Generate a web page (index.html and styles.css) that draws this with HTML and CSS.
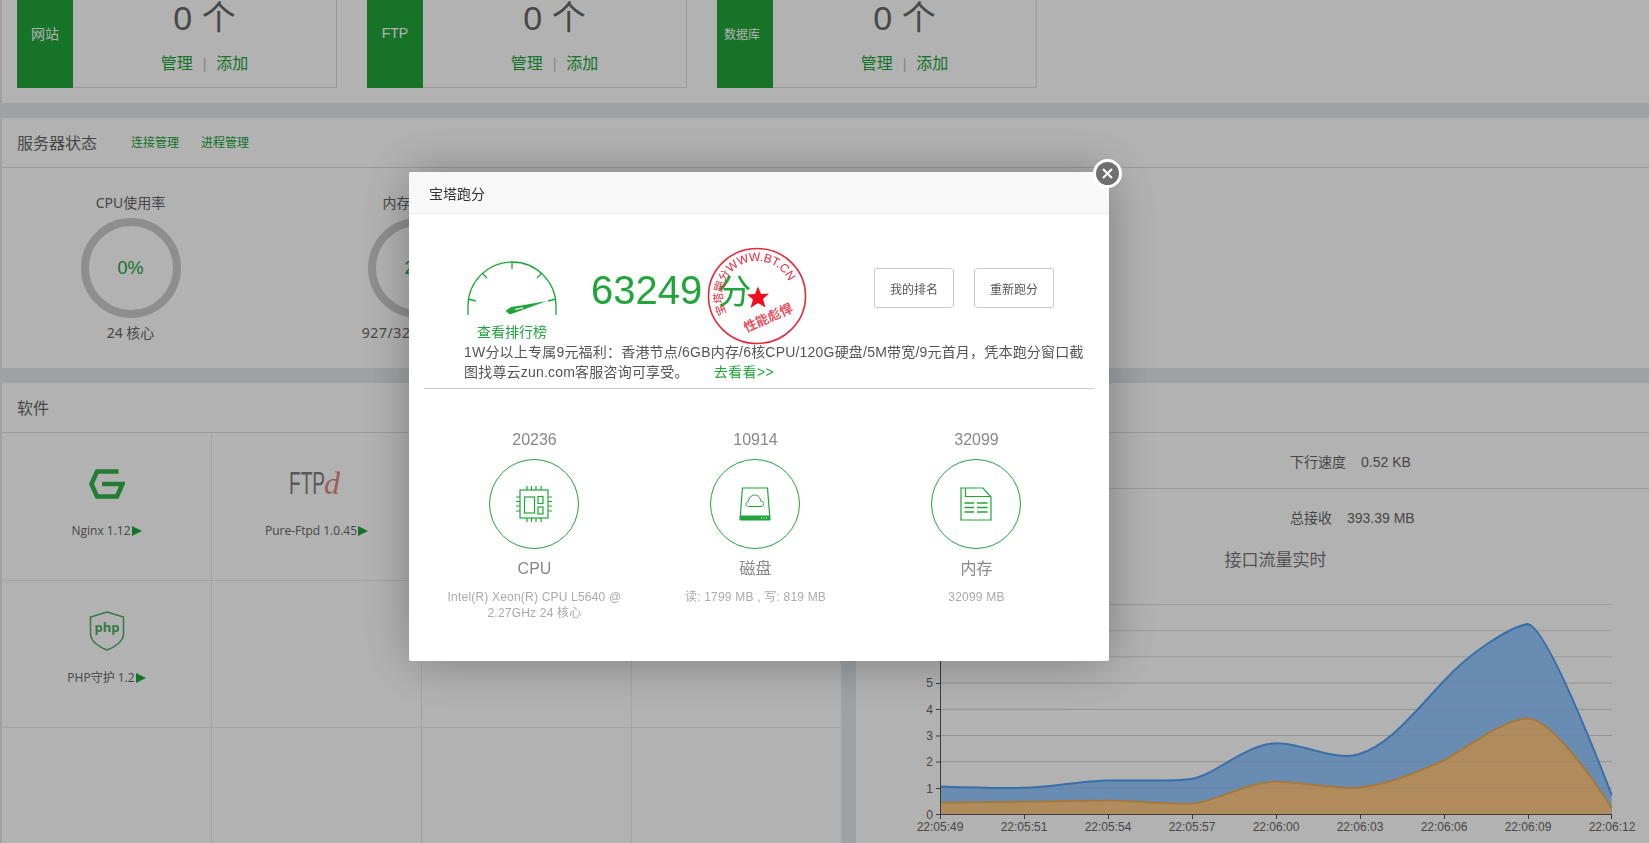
FILE: index.html
```html
<!DOCTYPE html>
<html lang="zh-CN">
<head>
<meta charset="utf-8">
<title>宝塔跑分</title>
<link rel="stylesheet" href="styles.css">
</head>
<body>
<div class="page">
  <section class="panel panel-stats">
    <div class="stat-row">
      <div class="stat-box"><div class="stat-tag">网站</div><div class="stat-main"><div class="stat-num">0 个</div><div class="stat-links"><a>管理</a><i>|</i><a>添加</a></div></div></div>
      <div class="stat-box"><div class="stat-tag">FTP</div><div class="stat-main"><div class="stat-num">0 个</div><div class="stat-links"><a>管理</a><i>|</i><a>添加</a></div></div></div>
      <div class="stat-box"><div class="stat-tag stat-tag-long">数据库</div><div class="stat-main"><div class="stat-num">0 个</div><div class="stat-links"><a>管理</a><i>|</i><a>添加</a></div></div></div>
    </div>
  </section>

  <section class="panel panel-server">
    <header class="panel-head"><h2>服务器状态</h2><a>连接管理</a><a>进程管理</a></header>
    <div class="load-row">
      <div class="load-item"><div class="load-title">CPU使用率</div><div class="ring">0%</div><div class="load-note">24 核心</div></div>
      <div class="load-item"><div class="load-title">内存使用率</div><div class="ring">2%</div><div class="load-note load-note-wide">927/32099 (MB)</div></div>
    </div>
  </section>

  <div class="bottom-row">
    <section class="panel panel-soft">
      <header class="panel-head"><h2>软件</h2></header>
      <div class="soft-grid">
        <div class="soft-cell">
          <div class="soft-icon"><svg width="36" height="30" viewBox="0 0 36 30"><path class="nginx-g" d="M29.500 2.500H8L2.500 15L8 27.500H28L33.500 15H13"/></svg></div>
          <div class="soft-label">Nginx 1.12<b class="play"></b></div>
        </div>
        <div class="soft-cell">
          <div class="soft-icon"><svg class="ftp-logo" width="58" height="28" viewBox="0 0 58 28"><text class="ftp-t" x="1" y="24" textLength="36" lengthAdjust="spacingAndGlyphs">FTP</text><text class="ftp-d" x="36" y="24">d</text></svg></div>
          <div class="soft-label">Pure-Ftpd 1.0.45<b class="play"></b></div>
        </div>
        <div class="soft-cell"></div>
        <div class="soft-cell"></div>
        <div class="soft-cell">
          <div class="soft-icon"><svg width="36" height="40" viewBox="0 0 36 40"><path class="php-shield" d="M18 1L34.500 6V23C34.500 30 26 36 18 39C10 36 1.500 30 1.500 23V6Z"/><text class="php-t" x="18" y="21">php</text></svg></div>
          <div class="soft-label">PHP守护 1.2<b class="play"></b></div>
        </div>
        <div class="soft-cell"></div>
        <div class="soft-cell"></div>
        <div class="soft-cell"></div>
        <div class="soft-cell"></div>
        <div class="soft-cell"></div>
        <div class="soft-cell"></div>
        <div class="soft-cell"></div>
      </div>
    </section>

    <section class="panel panel-net">
      <header class="panel-head"><h2>网络流量</h2></header>
      <div class="net-row net-row-line"><div class="net-col"><span>上行速度</span><span>0.34 KB</span></div><div class="net-col"><span>下行速度</span><span>0.52 KB</span></div></div>
      <div class="net-row"><div class="net-col"><span>总发送</span><span>21.07 MB</span></div><div class="net-col"><span>总接收</span><span>393.39 MB</span></div></div>
      <h3 class="chart-title">接口流量实时</h3>
      <svg class="chart" width="793" height="271" viewBox="856 572 793 271">
        <g class="grid">
          <path d="M940.500 789H1612M940.500 762.700H1612M940.500 736.500H1612M940.500 710.400H1612M940.500 684H1612M940.500 657.800H1612M940.500 631.700H1612M940.500 605.600H1612"/>
        </g>
        <path class="area-blue" d="M940.500 787.500C968 788.500 996 789.500 1024.400 788.800C1052 788 1080 782 1108.300 781.500C1136 781 1172 783 1192.200 779.700C1216 776 1245 744.500 1278 744.200C1300 744 1335 762 1358 755.500C1388 747 1410 718 1443.900 682C1470 653 1510 628 1527.800 625C1545 628 1590 740 1611.700 796V815H940.500Z"/>
        <path class="area-orange" d="M940.500 803.500C968 803.800 996 802.900 1024.400 802.700C1052 802.700 1080 801.400 1108.300 801.400C1136 801.400 1165 805.800 1192.200 804.500C1216 803 1245 783 1276 782.800C1300 783 1335 790 1358 788.800C1388 786 1420 772 1444 761.400C1472 745 1505 720 1527.800 719.500C1550 720 1590 775 1611.700 809V815H940.500Z"/>
        <path class="line-blue" d="M940.500 787.500C968 788.500 996 789.500 1024.400 788.800C1052 788 1080 782 1108.300 781.500C1136 781 1172 783 1192.200 779.700C1216 776 1245 744.500 1278 744.200C1300 744 1335 762 1358 755.500C1388 747 1410 718 1443.900 682C1470 653 1510 628 1527.800 625C1545 628 1590 740 1611.700 796"/>
        <path class="line-orange" d="M940.500 803.500C968 803.800 996 802.900 1024.400 802.700C1052 802.700 1080 801.400 1108.300 801.400C1136 801.400 1165 805.800 1192.200 804.500C1216 803 1245 783 1276 782.800C1300 783 1335 790 1358 788.800C1388 786 1420 772 1444 761.400C1472 745 1505 720 1527.800 719.500C1550 720 1590 775 1611.700 809"/>
        <g class="grid-over"><path d="M940.500 789H1612M940.500 762.700H1612M940.500 736.500H1612M940.500 710.400H1612M940.500 684H1612"/></g>
        <path class="axis" d="M940.500 600V815.500H1612M936 815.500H940.500M936 789.500H940.500M936 763H940.500M936 737H940.500M936 710.500H940.500M936 684.500H940.500M936 658H940.500M936 632H940.500M936 605.500H940.500M940.500 815V820M1024.500 815V820M1108.500 815V820M1192.500 815V820M1276.500 815V820M1360.500 815V820M1444.500 815V820M1528.500 815V820M1611.500 815V820"/>
        <g class="tick-y">
          <text x="933" y="820">0</text><text x="933" y="794">1</text><text x="933" y="767">2</text><text x="933" y="741">3</text><text x="933" y="715">4</text><text x="933" y="688">5</text>
        </g>
        <g class="tick-x">
          <text x="940" y="832">22:05:49</text><text x="1024" y="832">22:05:51</text><text x="1108" y="832">22:05:54</text><text x="1192" y="832">22:05:57</text><text x="1276" y="832">22:06:00</text><text x="1360" y="832">22:06:03</text><text x="1444" y="832">22:06:06</text><text x="1528" y="832">22:06:09</text><text x="1612" y="832">22:06:12</text>
        </g>
      </svg>
    </section>
  </div>
</div>

<div class="mask"></div>

<div class="modal">
  <button class="modal-close" aria-label="关闭"><svg width="13" height="13" viewBox="0 0 13 13"><path d="M2 2L11 11M11 2L2 11"/></svg></button>
  <div class="modal-title">宝塔跑分</div>
  <div class="modal-body">
    <div class="bench-top">
      <div class="gauge">
        <svg width="90" height="55" viewBox="0 0 90 55">
          <path class="gauge-arc" d="M1 54V45A44 44 0 0 1 89 45V54"/>
          <path class="gauge-tick" d="M45 1V8M15 12L20 17M75 12L70 17M1 38L9 40M89 38L81 40"/>
          <path class="gauge-needle" d="M80 40L54 44.500L44 46L38.500 50L43 53.500L54 49.500Z"/>
          <path class="gauge-slot" d="M48 48.500L56 46.800"/>
        </svg>
        <a class="gauge-link">查看排行榜</a>
      </div>
      <div class="score">63249<span>分</span></div>
      <div class="bench-actions"><button class="bench-btn">我的排名</button><button class="bench-btn">重新跑分</button></div>
      <svg class="stamp" width="100" height="98" viewBox="0 0 100 98">
        <defs><path id="stamp-arc" d="M19.700 66.500A35 35 0 1 1 84.500 43"/></defs>
        <ellipse class="stamp-ring" cx="50" cy="49" rx="48.500" ry="47.500"/>
        <text class="stamp-text"><textPath href="#stamp-arc" textLength="113" lengthAdjust="spacing">宝塔跑分<tspan class="stamp-url">WWW.BT.CN</tspan></textPath></text>
        <polygon class="stamp-star" points="51,39.500 54,47 62,46.500 56,52 58.500,60.500 51,56 43.500,61 46,52.500 40,47.500 48,47"/>
        <text class="stamp-motto" transform="translate(63 75) rotate(-24)">性能彪悍</text>
      </svg>
    </div>
    <p class="promo">1W分以上专属9元福利：香港节点/6GB内存/6核CPU/120G硬盘/5M带宽/9元首月，凭本跑分窗口截图找尊云zun.com客服咨询可享受。<a>去看看&gt;&gt;</a></p>
    <div class="bench-grid">
      <div class="bench-col">
        <div class="bench-score">20236</div>
        <div class="bench-circle">
          <svg width="36" height="36" viewBox="0 0 36 36">
            <g class="ic">
              <rect x="4" y="4" width="28" height="28"/>
              <rect x="8.500" y="11" width="10" height="16"/>
              <rect x="22" y="10.500" width="5" height="7"/>
              <rect x="22" y="21" width="5" height="7"/>
              <path d="M11 0V4M15.500 0V4M20 0V4M25 0V4M11 32V36M15.500 32V36M20 32V36M25 32V36M0 11H4M0 15.500H4M0 20H4M0 25H4M32 11H36M32 15.500H36M32 20H36M32 25H36"/>
            </g>
          </svg>
        </div>
        <div class="bench-name">CPU</div>
        <div class="bench-detail">Intel(R) Xeon(R) CPU L5640 @ 2.27GHz 24 核心</div>
      </div>
      <div class="bench-col">
        <div class="bench-score">10914</div>
        <div class="bench-circle">
          <svg width="32" height="34" viewBox="0 0 32 34">
            <g class="ic">
              <path d="M3.500 1H28.500L31 32.500H1Z"/>
              <path class="ic-thin" d="M9.500 19.500C6 19.500 6 14.500 9.500 14.500C9.500 11 12 8.500 15.500 8C19 8 21.500 10.500 21.500 14C25.500 13.500 26 19.500 22 19.500Z"/>
            </g>
            <rect class="ic-fill" x="1" y="28.500" width="30" height="5"/>
            <path class="ic-dots" d="M22 31H23M24.500 31H25.500M27 31H28"/>
          </svg>
        </div>
        <div class="bench-name">磁盘</div>
        <div class="bench-detail">读: 1799 MB , 写: 819 MB</div>
      </div>
      <div class="bench-col">
        <div class="bench-score">32099</div>
        <div class="bench-circle">
          <svg width="32" height="34" viewBox="0 0 32 34">
            <g class="ic">
              <path d="M1 1H23L31 10V33H1Z"/>
              <path d="M5.500 1V9.500H31"/>
              <path class="ic-bold" d="M4.500 16H14M17 16H27.500M4.500 20.500H14M17 20.500H27.500M4.500 25H14M17 25H27.500"/>
            </g>
          </svg>
        </div>
        <div class="bench-name">内存</div>
        <div class="bench-detail">32099 MB</div>
      </div>
    </div>
  </div>
</div>
</body>
</html>
```

FILE: styles.css
```css
* { box-sizing: border-box; }
html, body { margin: 0; padding: 0; height: 100%; overflow: hidden; }
body {
  font-family: "Liberation Sans", "Noto Sans CJK SC", sans-serif;
  font-size: 14px;
  color: #666;
  background: #e4e9ed;
}
a { color: #20a53a; text-decoration: none; }
h2, h3, p { margin: 0; font-weight: 400; }

.page { width: 1649px; height: 843px; padding-left: 2px; overflow: hidden; display: flex; flex-direction: column; gap: 15px; }
.panel { background: #fff; }

.panel-stats { height: 103px; flex: none; padding-left: 15px; }
.stat-row { display: flex; gap: 30px; }
.stat-box { width: 320px; height: 88px; display: flex; border-right: 1px solid #ddd; border-bottom: 1px solid #ddd; }
.stat-tag { width: 56px; height: 88px; margin-bottom: -1px; flex: none; background: #20a53a; color: #fff; display: flex; align-items: center; justify-content: center; font-size: 14px; padding-bottom: 22px; }
.stat-tag-long { font-size: 12px; padding-right: 6px; }
.stat-main { flex: 1; text-align: center; }
.stat-num { font-size: 34px; line-height: 36px; color: #666; height: 52px; }
.stat-links { font-size: 16px; line-height: 24px; }
.stat-links i { font-style: normal; color: #bbb; margin: 0 10px; font-size: 14px; }

.panel-server { height: 250px; flex: none; }
.panel-head { height: 50px; border-bottom: 1px solid #ddd; display: flex; align-items: center; padding: 0 0 2px 15px; flex: none; }
.panel-head h2 { font-size: 16px; color: #666; }
.panel-head a { font-size: 12px; margin-right: 22px; }
.panel-head h2 + a { margin-left: 34px; }
.load-row { display: grid; grid-template-columns: 257px 257px; column-gap: 30px; }
.load-item { display: flex; flex-direction: column; align-items: center; padding-top: 25px; }
.load-title, .load-note { line-height: 20px; color: #666; white-space: nowrap; font-family: "Noto Sans", "Noto Sans CJK SC", sans-serif; }
.ring { width: 100px; height: 100px; margin: 5px 0; border: 8px solid #ccc; border-radius: 50%; display: flex; align-items: center; justify-content: center; font-size: 18px; color: #20a53a; }
.load-note-wide { letter-spacing: .6px; }

.bottom-row { flex: 1; display: flex; gap: 14px; min-height: 0; }
.panel-soft { width: 840px; flex: none; display: flex; flex-direction: column; }
.soft-grid { display: grid; grid-template-columns: repeat(4, 1fr); grid-auto-rows: 147px; padding-top: 1px; }
.soft-cell { border-right: 1px solid #e8eaee; border-bottom: 1px solid #e8eaee; padding-top: 30px; text-align: center; }
.soft-icon { height: 40px; display: flex; align-items: center; justify-content: center; }
.soft-label { margin-top: 17px; font-size: 12px; line-height: 20px; color: #666; font-family: "Open Sans", "Noto Sans CJK SC", sans-serif; }
.play { display: inline-block; margin-left: 1px; border-left: 10px solid #20a53a; border-top: 5.5px solid transparent; border-bottom: 5.5px solid transparent; vertical-align: -1px; }
.nginx-g { fill: none; stroke: #2fb34a; stroke-width: 4.500; }
.ftp-logo { overflow: visible; }
.ftp-t { font-size: 32px; fill: #808080; font-family: "Liberation Sans", sans-serif; }
.ftp-d { font-size: 32px; fill: #e0857f; font-style: italic; font-family: "Liberation Serif", serif; }
.php-shield { fill: none; stroke: #4cae5c; stroke-width: 1.500; }
.php-t { font-size: 13px; font-weight: 700; text-anchor: middle; fill: #4cae5c; font-family: "Open Sans", sans-serif; }

.panel-net { flex: 1; min-width: 0; display: flex; flex-direction: column; }
.net-row { height: 56px; flex: none; display: grid; grid-template-columns: 434px 1fr; align-items: center; }
.net-row-line { border-bottom: 1px solid #ddd; }
.net-col { display: flex; align-items: baseline; gap: 15px; }
.net-col:first-child { padding-left: 40px; }
.chart-title { height: 26px; padding: 3px 0 0 46px; font-size: 17px; line-height: 26px; color: #777; text-align: center; flex: none; }
.chart { display: block; flex: none; }
.grid path { fill: none; stroke: #ddd; stroke-width: 1; }
.grid-over path { fill: none; stroke: #888; stroke-opacity: .12; stroke-width: 1; }
.area-blue { fill: #96c9ff; }
.area-orange { fill: #fdc985; }
.line-blue { fill: none; stroke: #52a0f0; stroke-width: 2; }
.line-orange { fill: none; stroke: #eeae55; stroke-width: 2; }
.axis { fill: none; stroke: #555; stroke-width: 1; }
.tick-y text { font-size: 12px; fill: #666; text-anchor: end; }
.tick-x text { font-size: 12px; fill: #666; text-anchor: middle; }

.mask { position: fixed; inset: 0; background: rgba(0, 0, 0, .3); }
.modal { position: fixed; left: 409px; top: 172px; width: 700px; background: #fff; border-radius: 2px; box-shadow: 1px 1px 50px rgba(0, 0, 0, .3); }
.modal-close { position: absolute; top: -13px; right: -13px; width: 29px; height: 29px; padding: 0; background: #6f6f6f; border: 3px solid #fff; border-radius: 50%; display: flex; align-items: center; justify-content: center; }
.modal-close path { fill: none; stroke: #fff; stroke-width: 2; }
.modal-title { height: 42px; line-height: 44px; padding-left: 20px; background: #f8f8f8; border-bottom: 1px solid #eee; color: #333; font-size: 14px; border-radius: 2px 2px 0 0; }
.modal-body { padding: 0 15px 40px 15px; }

.bench-top { position: relative; display: flex; align-items: flex-start; height: 128px; padding: 47px 40px 0 43px; }
.gauge { width: 90px; flex: none; text-align: center; margin-right: 34px; }
.gauge svg { display: block; }
.gauge-arc, .gauge-tick { fill: none; stroke: #20a53a; stroke-width: 1.300; }
.gauge-needle { fill: #20a53a; }
.gauge-slot { fill: none; stroke: #fff; stroke-width: 1.200; }
.gauge-link { display: block; line-height: 20px; margin: 6px -10px 0; font-size: 14px; white-space: nowrap; }
.score { margin-top: 1px; font-size: 40px; line-height: 56px; color: #20a53a; white-space: nowrap; }
.score span { font-size: 34px; margin-left: 15px; }
.bench-actions { margin-left: auto; margin-top: 7px; display: flex; gap: 20px; }
.bench-btn { width: 80px; height: 40px; padding: 0; background: #fff; border: 1px solid #ccc; border-radius: 3px; font: 12px "Liberation Sans", "Noto Sans CJK SC", sans-serif; color: #555; }
.stamp { position: absolute; left: 283px; top: 33px; }
.stamp-ring { fill: none; stroke: #e8283a; stroke-width: 1.600; }
.stamp-text { font-size: 11px; fill: #e8283a; }
.stamp-url { font-size: 12px; }
.stamp-star { fill: #f30d1c; }
.stamp-motto { font-size: 13px; font-weight: 700; fill: #ef4a58; text-anchor: middle; }

.promo { width: 625px; margin-left: 40px; line-height: 20px; color: #555; font-size: 14px; letter-spacing: .2px; }
.promo a { margin-left: 25px; letter-spacing: .4px; }
.bench-grid { margin-top: 6px; border-top: 1px solid #ccc; padding-top: 40px; display: grid; grid-template-columns: repeat(3, 221px); }
.bench-col { display: flex; flex-direction: column; align-items: center; text-align: center; }
.bench-score { font-size: 16px; line-height: 22px; color: #888; }
.bench-circle { width: 90px; height: 90px; margin: 8px 2px 0 0; border: 1px solid #20a53a; border-radius: 50%; display: flex; align-items: center; justify-content: center; }
.bench-name { margin-top: 8px; font-size: 16px; line-height: 24px; color: #888; }
.bench-detail { margin-top: 8px; width: 190px; font-size: 12px; line-height: 16px; color: #aaa; letter-spacing: .2px; }
.ic { fill: none; stroke: #20a53a; stroke-width: 1.200; }
.ic-thin { stroke-width: 1; }
.ic-bold { stroke-width: 1.500; }
.ic-fill { fill: #20a53a; }
.ic-dots { fill: none; stroke: #fff; stroke-width: 1; }
```
